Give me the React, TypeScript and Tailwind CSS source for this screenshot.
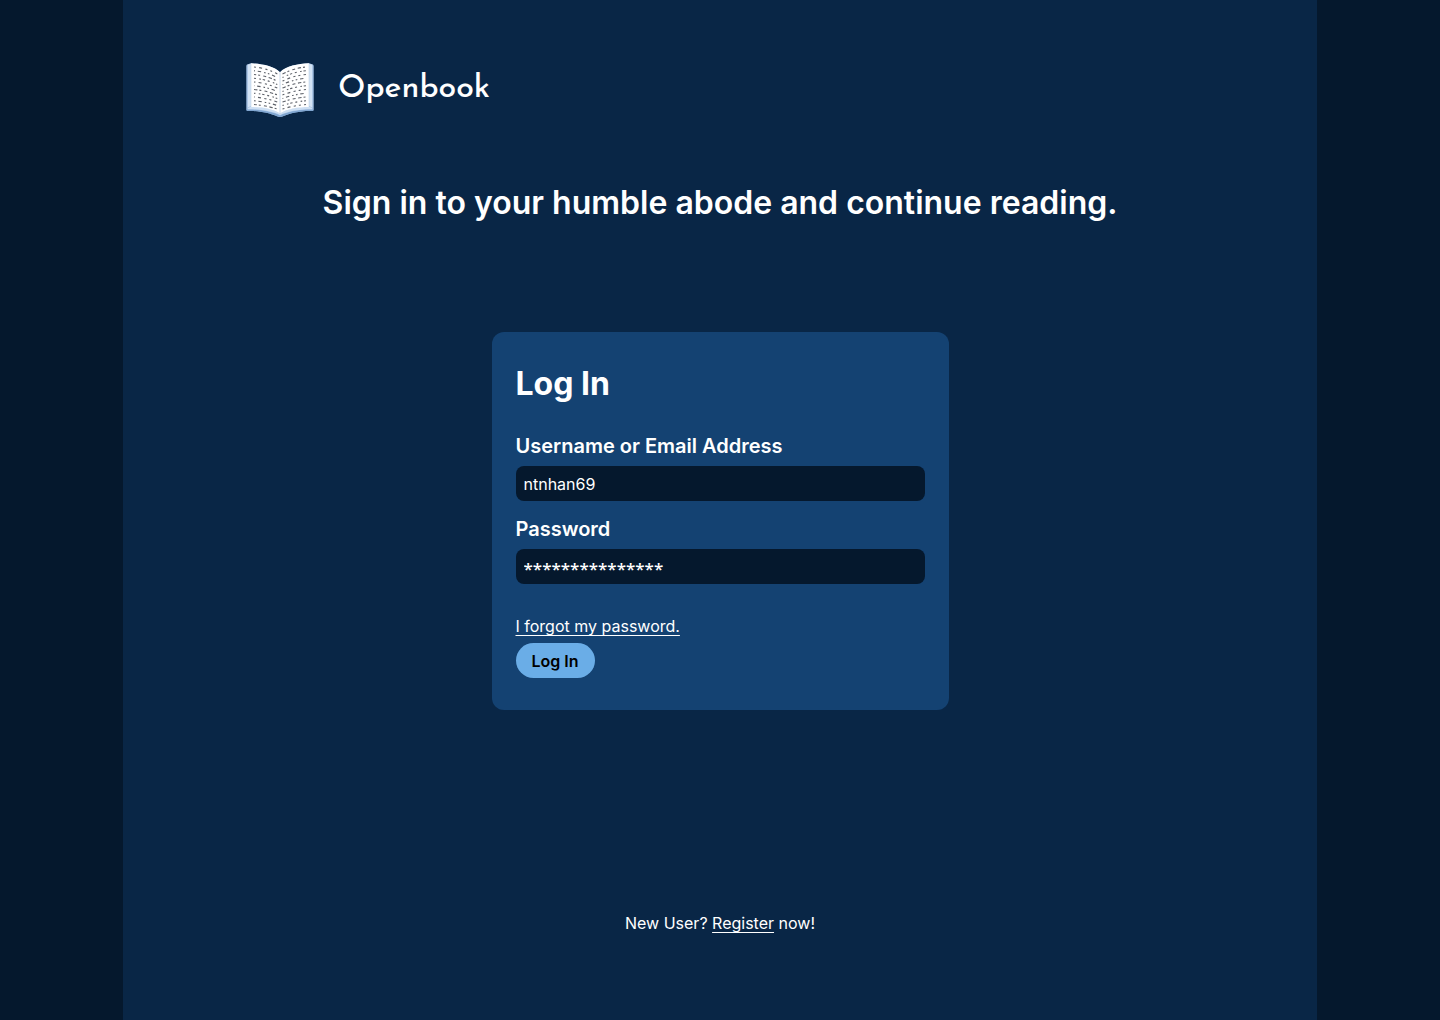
const DASHES = [
  '2 3.2 3 3.4 2.2 3',
  '1.6 2.8 3.4 3 1.6 2.4',
  '3.4 2 2 3.2 3 2.6',
  '2 3.4 1.6 1.8 2.4 2.8',
];

function BookLogo() {
  const rows = Array.from({ length: 11 }, (_, i) => i);
  return (
    <svg viewBox="0 0 68 54" className="h-[54px] w-[68px] shrink-0" aria-hidden="true">
      <path
        d="M5 .3L1 1.500Q.3 2 .3 3V46.500Q.5 48 2 48C12 47.500 24 50 31 53.300Q34 54.500 37 53.300C44 50 56 47.500 66 48Q67.500 48 67.700 46.500V3Q67.600 2 67 1.500L63 .3C52 .8 40 3 34 9.200C28 3 16 .8 5 .3Z"
        fill="#a3bfe2"
      />
      <path
        d="M.3 46.500Q.5 48 2 48C12 47.500 24 50 31 53.300Q34 54.500 37 53.300C44 50 56 47.500 66 48Q67.500 48 67.700 46.500C55 46.500 42 48.500 34 52.500C26 48.500 13 46.500 .3 46.500Z"
        fill="#7fa5d0"
      />
      <path d="M1.800 1.800V44.500L5 43V.8Z" fill="#d3e3f5" />
      <path d="M66.200 1.800V44.500L63 43V.8Z" fill="#d3e3f5" />
      <path
        d="M2 45L5 43.500C16 43.500 27 46 34 50.500C41 46 52 43.500 63 43.500L66 45V46.300C54 46 41 48.500 34 52C27 48.500 14 46 2 46.300Z"
        fill="#cddff3"
      />
      <path d="M5 .3C16 .8 28 3 34 9.200V50.500C27 46 16 44 5 44Z" fill="#fff" />
      <path d="M63 .3C52 .8 40 3 34 9.200V50.500C41 46 52 44 63 44Z" fill="#fff" />
      <path d="M34 9.200V51" stroke="#bccfe6" strokeWidth=".8" />
      <path d="M5 .5V44M63 .5V44" stroke="#b6cce4" strokeWidth=".5" />
      <g fill="none" stroke="#5c6068" strokeWidth="1.1">
        {rows.map((i) => {
          const y = 4 + i * 3.75;
          const drop = 7 - i * 0.25;
          return (
            <g key={i}>
              <path d={`M8 ${y}Q20 ${y + 1} 31.300 ${y + drop}`} strokeDasharray={DASHES[i % 4]} strokeDashoffset={(i % 3) * 0.6} />
              <path
                d={`M36.500 ${y + drop}Q48 ${y + 1} 60 ${y}`}
                strokeDasharray={DASHES[(i + 2) % 4]}
                strokeDashoffset={(i % 2) * 0.8}
              />
            </g>
          );
        })}
      </g>
    </svg>
  );
}

type FieldProps = { id: string; label: string; value: string; autoComplete: string; className: string };

function Field({ id, label, value, autoComplete, className }: FieldProps) {
  return (
    <div className="flex flex-col gap-2">
      <label htmlFor={id} className="text-xl leading-6 font-semibold">
        {label}
      </label>
      <input
        id={id}
        type="text"
        autoComplete={autoComplete}
        defaultValue={value}
        className={`h-[35px] w-full rounded-lg bg-[#05182d] px-2 text-white ${className}`}
      />
    </div>
  );
}

export default function App() {
  return (
    <div className="min-h-screen bg-[#05182d] font-['Inter',sans-serif] text-base text-white">
      <main className="mx-auto flex min-h-screen w-full max-w-[1194px] flex-col items-center bg-[#092646] pt-[63px] pb-[85px]">
        <header className="flex w-full items-center gap-6 px-[123px]">
          <BookLogo />
          <span className="pb-0.5 font-['Josefin_Sans','Lato',sans-serif] text-[32px] leading-10 font-medium">Openbook</span>
        </header>

        <h1 className="mt-16 text-center text-[32px] leading-11 font-semibold">
          Sign in to your humble abode and continue reading.
        </h1>

        <form
          className="mt-[107px] flex w-[457px] max-w-full flex-col rounded-xl bg-[#144272] px-6 py-8"
          onSubmit={(event) => event.preventDefault()}
        >
          <h2 className="text-[32px] leading-10 font-bold">Log In</h2>
          <div className="mt-[30px] flex flex-col gap-4">
            <Field id="username" label="Username or Email Address" value="ntnhan69" autoComplete="username" className="text-base" />
            <Field
              id="password"
              label="Password"
              value="***************"
              autoComplete="off"
              className="pt-1 font-['Noto_Sans',sans-serif] text-[17px] font-medium"
            />
          </div>
          <a href="#forgot" className="mt-[30px] self-start leading-6 underline underline-offset-3">
            I forgot my password.
          </a>
          <button type="submit" className="mt-[5px] h-[35px] self-start rounded-full bg-[#6aade7] px-4 font-semibold text-black">
            Log In
          </button>
        </form>

        <p className="mt-auto leading-6">
          New User?{' '}
          <a href="#register" className="underline underline-offset-3">
            Register
          </a>{' '}
          now!
        </p>
      </main>
    </div>
  );
}
